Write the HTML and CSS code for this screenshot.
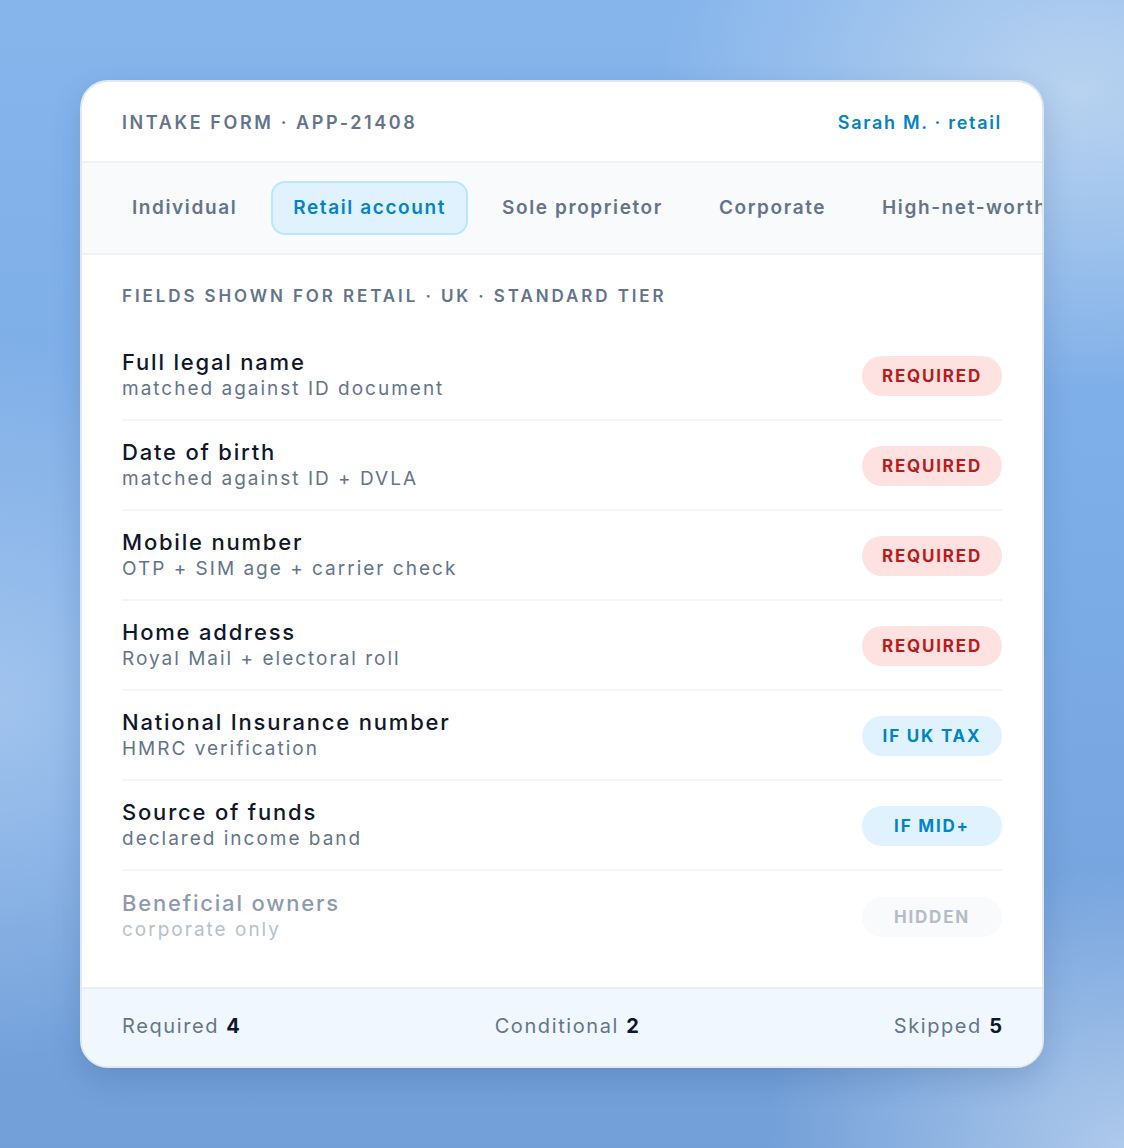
FILE: index.html
```html
<!DOCTYPE html>
<html lang="en">
<head>
  <meta charset="UTF-8" />
  <meta name="viewport" content="width=device-width, initial-scale=1.0"/>
  <title>Intake form</title>
  <link rel="stylesheet" href="styles.css">
</head>
<body>
<div class="card">
  <div class="head">
    <div class="head-title">INTAKE FORM · APP-21408</div>
    <div class="head-user">Sarah M. · retail</div>
  </div>

  <div class="tabs">
    <div class="tab">Individual</div>
    <div class="tab active">Retail account</div>
    <div class="tab">Sole proprietor</div>
    <div class="tab">Corporate</div>
    <div class="tab">High-net-worth</div>
  </div>

  <div class="body">
    <div class="section">FIELDS SHOWN FOR RETAIL · UK · STANDARD TIER</div>

    <div class="field">
      <div class="field-text">
        <div class="field-name">Full legal name</div>
        <div class="field-note">matched against ID document</div>
      </div>
      <span class="badge req">REQUIRED</span>
    </div>
    <div class="field">
      <div class="field-text">
        <div class="field-name">Date of birth</div>
        <div class="field-note">matched against ID + DVLA</div>
      </div>
      <span class="badge req">REQUIRED</span>
    </div>
    <div class="field">
      <div class="field-text">
        <div class="field-name">Mobile number</div>
        <div class="field-note">OTP + SIM age + carrier check</div>
      </div>
      <span class="badge req">REQUIRED</span>
    </div>
    <div class="field">
      <div class="field-text">
        <div class="field-name">Home address</div>
        <div class="field-note">Royal Mail + electoral roll</div>
      </div>
      <span class="badge req">REQUIRED</span>
    </div>
    <div class="field">
      <div class="field-text">
        <div class="field-name">National Insurance number</div>
        <div class="field-note">HMRC verification</div>
      </div>
      <span class="badge cond">IF UK TAX</span>
    </div>
    <div class="field">
      <div class="field-text">
        <div class="field-name">Source of funds</div>
        <div class="field-note">declared income band</div>
      </div>
      <span class="badge cond">IF MID+</span>
    </div>
    <div class="field off">
      <div class="field-text">
        <div class="field-name">Beneficial owners</div>
        <div class="field-note">corporate only</div>
      </div>
      <span class="badge hid">HIDDEN</span>
    </div>
  </div>

  <div class="foot">
    <div>Required <b>4</b></div>
    <div>Conditional <b>2</b></div>
    <div>Skipped <b>5</b></div>
  </div>
</div>
</body>
</html>
```

FILE: styles.css
```css
* { box-sizing: border-box; margin: 0; padding: 0; }
html, body { height: 100%; }
body {
  font-family: 'Inter', 'Noto Sans', sans-serif;
  display: flex; align-items: center; justify-content: center;
  background:
    radial-gradient(ellipse 420px 300px at 1080px 90px, rgba(190, 214, 240, 0.9), transparent),
    radial-gradient(ellipse 300px 360px at 0px 700px, rgba(170, 202, 240, 0.8), transparent),
    radial-gradient(ellipse 360px 280px at 1124px 1148px, rgba(180, 206, 238, 0.9), transparent),
    linear-gradient(180deg, #86b5ec 0%, #7cace6 50%, #729fd8 100%);
}

.card {
  width: 964px; height: 988px;
  background: #fff; border: 2px solid #e3e8f0; border-radius: 28px;
  overflow: hidden; display: flex; flex-direction: column;
  box-shadow: 0 12px 30px rgba(30, 60, 110, 0.18);
}

.head {
  height: 81px; padding: 2px 40px 0; flex: none;
  display: flex; align-items: center; justify-content: space-between;
  border-bottom: 2px solid #eef1f5;
}
.head-title { font-size: 18px; font-weight: 600; letter-spacing: 2.6px; color: #64748b; }
.head-user { font-size: 18px; font-weight: 600; letter-spacing: 1.7px; color: #0284c7; }

/* last tab runs past the card edge and gets clipped */
.tabs {
  display: flex; gap: 12px; padding: 18px 28px; flex: none;
  background: #f8fafc; border-bottom: 2px solid #eef1f5;
  white-space: nowrap; overflow: hidden;
}
.tab {
  padding: 14px 20px; border: 2px solid transparent; border-radius: 14px;
  font-size: 19px; font-weight: 600; line-height: 22px; letter-spacing: 1.6px; color: #64748b;
}
.tab.active { background: #e0f2fe; border-color: #bae6fd; color: #0284c7; }

.body { flex: 1; padding: 29px 40px 0; }
.section {
  font-size: 17px; font-weight: 600; letter-spacing: 2.9px; color: #64748b;
  line-height: 24px; margin-bottom: 23px;
}

.field {
  height: 90px; display: flex; align-items: center; justify-content: space-between;
  border-bottom: 2px solid #f1f5f9;
}
.field:last-child { border-bottom: none; }
.field-name { font-size: 22px; font-weight: 500; color: #0f172a; line-height: 28px; letter-spacing: 1.8px; }
.field-note { font-size: 19px; color: #64748b; line-height: 26px; letter-spacing: 2px; }
.field.off .field-name { color: #8e9aae; }
.field.off .field-note { color: #b7c0cd; }

.badge {
  width: 140px; height: 40px; border-radius: 20px; margin-top: 2px;
  display: flex; align-items: center; justify-content: center;
  font-size: 17px; font-weight: 700; letter-spacing: 1.8px;
}
.badge.req { background: #fee2e2; color: #b91c1c; }
.badge.cond { background: #e0f2fe; color: #0284c7; }
.badge.hid { background: #f8fafc; color: #b4bcc8; }

.foot {
  height: 79px; flex: none; padding: 0 40px 3px;
  display: flex; align-items: center; justify-content: space-between;
  background: #f0f7fe; border-top: 2px solid #e9eef5;
  font-size: 20px; letter-spacing: 1.6px; color: #64748b;
}
.foot b { color: #0f172a; font-weight: 700; letter-spacing: 0; }
```
